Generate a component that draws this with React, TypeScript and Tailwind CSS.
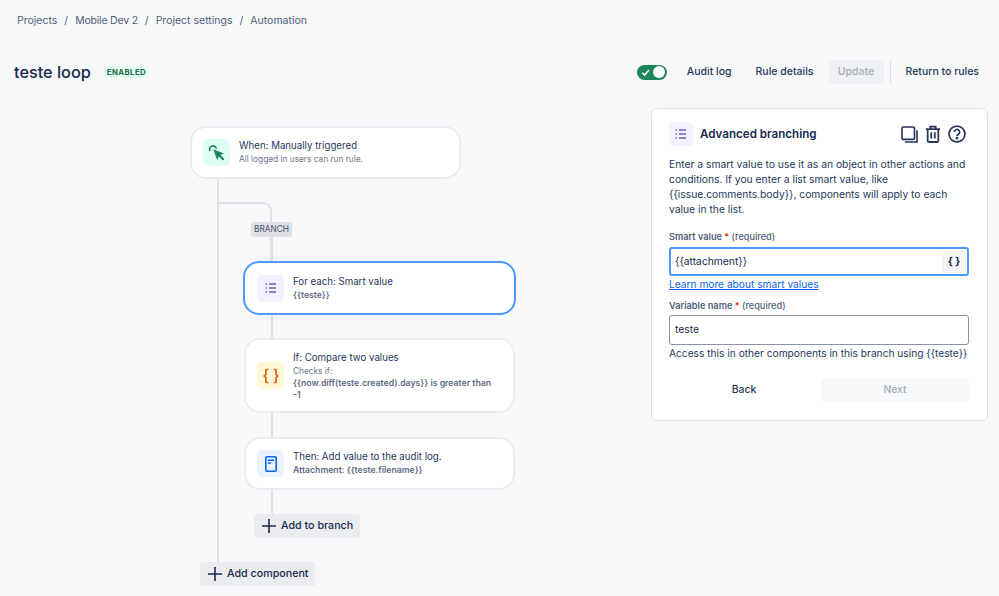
const sans = "font-['Inter','Noto_Sans',sans-serif]";

function ListIcon() {
  return (
    <svg width="14" height="14" viewBox="0 0 14 14" fill="none" stroke="#6e5dc6" strokeWidth="1.3">
      <path d="M5 3h7M5 7h7M5 11h7" />
      <path d="M1.5 3h1.4M1.5 7h1.4M1.5 11h1.4" strokeWidth="1.6" />
    </svg>
  );
}

function CursorIcon() {
  return (
    <svg width="18" height="18" viewBox="0 0 18 18" fill="none">
      <path d="M2 7.2A3.5 3.5 0 1 1 8.4 4.6" stroke="#1f845a" strokeWidth="1.6" />
      <path d="M5.2 5.2L16 9.4L12.4 11L16.4 15L14.8 16.6L10.8 12.6L9.2 16.2Z" fill="#1f845a" />
    </svg>
  );
}

function BracesIcon() {
  return (
    <svg width="16" height="16" viewBox="0 0 16 16" fill="none" stroke="#e2600f" strokeWidth="1.7">
      <path d="M5.4 1.5H3.6a.7.7 0 0 0-.7.7v4.2L1.2 8l1.7 1.6v4.2c0 .4.3.7.7.7h1.8" />
      <path d="M10.6 1.5h1.8c.4 0 .7.3.7.7v4.2L14.8 8l-1.7 1.6v4.2c0 .4-.3.7-.7.7h-1.8" />
    </svg>
  );
}

function LogIcon() {
  return (
    <svg width="12" height="16" viewBox="0 0 12 16" fill="none">
      <rect x="0.8" y="0.8" width="10.4" height="14.4" rx="1" stroke="#0c66e4" strokeWidth="1.6" fill="#e9f2ff" />
      <path d="M2.8 4.2h6.4M2.8 7h3.4" stroke="#0c66e4" strokeWidth="1.4" />
    </svg>
  );
}

function CopyIcon() {
  return (
    <svg width="17" height="17" viewBox="0 0 20 20" fill="none" stroke="#253858" strokeWidth="1.9">
      <rect x="1.2" y="1.2" width="14.6" height="14.6" rx="1.5" />
      <path d="M4.5 18.8h14.3V5" />
    </svg>
  );
}

function TrashIcon() {
  return (
    <svg width="16" height="18" viewBox="0 0 18 20" fill="none" stroke="#253858" strokeWidth="2">
      <path d="M1 4.5h16M6 4.5V1.7h6v2.8M3 4.5V18a1 1 0 0 0 1 1h10a1 1 0 0 0 1-1V4.5M7 8v7M11 8v7" />
    </svg>
  );
}

function HelpIcon() {
  return (
    <svg width="18" height="18" viewBox="0 0 19 19" fill="none" stroke="#253858" strokeWidth="1.8">
      <circle cx="9.5" cy="9.5" r="8.4" />
      <path d="M6.8 7.5a2.7 2.7 0 1 1 4.2 2.2c-.9.6-1.5 1-1.5 2" />
      <circle cx="9.5" cy="14" r="0.6" fill="#253858" />
    </svg>
  );
}

function PlusIcon() {
  return (
    <svg width="14" height="14" viewBox="0 0 14 14" fill="none" stroke="#172b4d" strokeWidth="1.6">
      <path d="M7 0v14M0 7h14" />
    </svg>
  );
}

function Badge({ className, children }: { className: string; children: React.ReactNode }) {
  return <div className={`flex h-[27px] w-[27px] shrink-0 items-center justify-center rounded-[5px] ${className}`}>{children}</div>;
}

type NodeProps = {
  icon: React.ReactNode;
  title: string;
  active?: boolean;
  className?: string;
  children: React.ReactNode;
};

function FlowCard({ icon, title, active, className, children }: NodeProps) {
  return (
    <div
      className={`relative z-10 flex items-center gap-[9px] rounded-[16px] bg-white pr-[20px] ${
        active ? "border-2 border-[#4c9aff] pl-[12px]" : "border-2 border-[#ebecf0] pl-[11px]"
      } ${className}`}
    >
      {icon}
      <div className="min-w-0 grow">
        <div className="text-[9.7px] leading-[14px] text-[#253858]">{title}</div>
        {children}
      </div>
    </div>
  );
}

function AddButton({ label, className }: { label: string; className: string }) {
  return (
    <div className={`relative z-10 flex h-[24px] items-center gap-[5px] rounded-[3px] bg-[#ebecf0] pl-[8px] text-[10.7px] font-medium text-[#172b4d] ${className}`}>
      <PlusIcon />
      {label}
    </div>
  );
}

export default function App() {
  return (
    <div className={`${sans} h-[596px] w-[999px] overflow-hidden bg-[#f7f8fa] text-[#172b4d] antialiased`}>
      <div className="flex h-[42px] items-center gap-[7px] pl-[17px] text-[10.5px] text-[#505f79]">
        <span>Projects</span>
        <span>/</span>
        <span className="tracking-[-0.2px]">Mobile Dev 2</span>
        <span>/</span>
        <span>Project settings</span>
        <span>/</span>
        <span>Automation</span>
      </div>

      <div className="mt-[16px] flex h-[28px] items-center pl-[14px] pr-[20px]">
        <h1 className="text-[16.3px] font-medium text-[#172b4d]">teste loop</h1>
        <span className="ml-[13px] rounded-[3px] bg-[#e3fcef] px-[3px] text-[7.8px] font-bold leading-[12px] tracking-[0.4px] text-[#216e4e]">ENABLED</span>
        <div className="ml-auto flex items-center text-[10.5px] font-medium text-[#253858]">
          <div className="flex h-[15px] w-[30px] items-center justify-between rounded-full bg-[#1f845a] pl-[4px] pr-[1.5px]">
            <svg width="9" height="9" viewBox="0 0 8 8" fill="none" stroke="white" strokeWidth="1.3">
              <path d="M1 4.2L3.2 6.3L7 1.8" />
            </svg>
            <span className="h-[12px] w-[12px] rounded-full bg-white" />
          </div>
          <span className="ml-[20px]">Audit log</span>
          <span className="ml-[24px]">Rule details</span>
          <span className="ml-[15px] flex h-[24px] w-[55px] items-center justify-center rounded-[3px] bg-[#f0f1f4] text-[#a5adba]">Update</span>
          <span className="ml-[6px] h-[24px] w-[1px] bg-[#dfe1e6]" />
          <span className="ml-[15px]">Return to rules</span>
        </div>
      </div>

      <div className="mt-[22px] flex">
        <div className="relative ml-[190px] w-[326px] pt-[18px]">
          <FlowCard
            className="h-[53px] w-[271px]"
            title="When: Manually triggered"
            icon={
              <Badge className="bg-[#dcfff1]">
                <CursorIcon />
              </Badge>
            }
          >
            <div className="text-[8.3px] leading-[13px] text-[#6b778c]">All logged in users can run rule.</div>
          </FlowCard>

          <div className="absolute left-[27px] top-[70px] h-[386px] w-[2px] bg-[#dfe1e6]" />
          <div className="absolute left-[28px] top-[94px] h-[60px] w-[54px] rounded-tr-[9px] border-r-2 border-t-2 border-[#dfe1e6]" />

          <div className="relative ml-[54px] mt-[43px]">
            <div className="absolute left-[27px] top-[15px] h-[277px] w-[2px] bg-[#dfe1e6]" />
            <div className="relative z-10 ml-[7px] flex h-[15px] w-[41px] items-center justify-center rounded-[3px] bg-[#dfe1e6] text-[8.3px] text-[#42526e]">BRANCH</div>

            <FlowCard
              active
              className="mt-[24px] h-[54px] w-[273px] -translate-x-[1px]"
              title="For each: Smart value"
              icon={
                <Badge className="bg-[#f3f0ff]">
                  <ListIcon />
                </Badge>
              }
            >
              <div className="text-[8.7px] font-semibold leading-[13px] text-[#5e6c84]">{"{{teste}}"}</div>
            </FlowCard>

            <FlowCard
              className="mt-[23px] h-[75px] w-[271px]"
              title="If: Compare two values"
              icon={
                <Badge className="bg-[#fff7d6]">
                  <BracesIcon />
                </Badge>
              }
            >
              <div className="text-[8.3px] leading-[12px] text-[#6b778c]">Checks if:</div>
              <div className="text-[8.7px] font-semibold leading-[12px] text-[#5e6c84]">{"{{now.diff(teste.created).days}} is greater than -1"}</div>
            </FlowCard>

            <FlowCard
              className="mt-[24px] h-[53px] w-[271px]"
              title="Then: Add value to the audit log."
              icon={
                <Badge className="bg-[#e9f2ff]">
                  <LogIcon />
                </Badge>
              }
            >
              <div className="text-[8.7px] font-semibold leading-[13px] text-[#5e6c84]">{"Attachment: {{teste.filename}}"}</div>
            </FlowCard>

            <AddButton label="Add to branch" className="ml-[10px] mt-[24px] w-[106px]" />
          </div>

          <AddButton label="Add component" className="ml-[10px] mt-[24px] w-[115px]" />
        </div>

        <div className="ml-[135px] h-[313px] w-[337px] rounded-[6px] border border-[#dfe1e6] bg-white pl-[17px] pr-[18px] pt-[13px]">
          <div className="flex h-[24px] items-center">
            <div className="flex h-[24px] w-[24px] items-center justify-center rounded-[5px] bg-[#f3f0ff]">
              <ListIcon />
            </div>
            <h2 className="ml-[7px] pt-[2px] text-[11.6px] font-semibold text-[#172b4d]">Advanced branching</h2>
            <div className="ml-auto mr-[3px] flex items-center gap-[7px]">
              <CopyIcon />
              <TrashIcon />
              <HelpIcon />
            </div>
          </div>
          <p className="mt-[11px] text-[10.3px] leading-[15px] text-[#253858]">
            {"Enter a smart value to use it as an object in other actions and conditions. If you enter a list smart value, like {{issue.comments.body}}, components will apply to each value in the list."}
          </p>

          <label className="mt-[14px] block text-[9.2px] font-semibold leading-[12px] text-[#505f79]">
            Smart value <span className="text-[#de350b]">*</span> <span className="font-medium">(required)</span>
          </label>
          <div className="mt-[4px] flex h-[29px] items-center justify-between rounded-[3px] border-2 border-[#4c9aff] pl-[4px] pr-[1px] text-[10.3px] text-[#172b4d]">
            <span>{"{{attachment}}"}</span>
            <span className="flex h-[23px] w-[24px] items-center justify-center rounded-[3px] bg-[#f4f5f7] text-[10.5px] font-bold">{"{ }"}</span>
          </div>
          <a className="mt-[1px] block text-[10.2px] leading-[14px] text-[#0c66e4] underline">Learn more about smart values</a>

          <label className="mt-[9px] block text-[9.2px] font-semibold leading-[12px] text-[#505f79]">
            Variable name <span className="text-[#de350b]">*</span> <span className="font-medium">(required)</span>
          </label>
          <div className="mt-[3px] flex h-[30px] items-center rounded-[3px] border border-[#8993a4] pl-[5px] text-[10.3px] text-[#172b4d]">teste</div>
          <div className="mt-[1px] whitespace-nowrap text-[10.2px] leading-[14px] text-[#253858]">{"Access this in other components in this branch using {{teste}}"}</div>

          <div className="mt-[18px] flex gap-[2px] text-[10.4px] font-medium">
            <div className="flex h-[24px] w-[150px] items-center justify-center text-[#253858]">Back</div>
            <div className="flex h-[24px] w-[148px] items-center justify-center rounded-[3px] bg-[#f7f8fa] text-[#a5adba]">Next</div>
          </div>
        </div>
      </div>
    </div>
  );
}
